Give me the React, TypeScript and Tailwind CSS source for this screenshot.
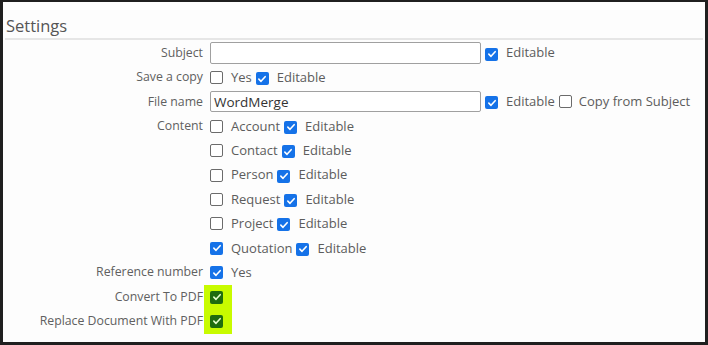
import React from "react";

function Box({ checked, green }: { checked?: boolean; green?: boolean }) {
  if (green) {
    return (
      <span className="inline-flex h-[13px] w-[13px] items-center justify-center rounded-[2px] bg-[#1f6d0f] shrink-0">
        <svg viewBox="0 0 12 12" className="h-[10px] w-[10px]">
          <path d="M2.2 6.2 L4.8 8.8 L9.8 3.2" fill="none" stroke="#e8ffd0" strokeWidth="1.9" strokeLinecap="round" strokeLinejoin="round" />
        </svg>
      </span>
    );
  }
  if (checked) {
    return (
      <span className="inline-flex h-[13px] w-[13px] items-center justify-center rounded-[2px] bg-[#1572e8] shrink-0">
        <svg viewBox="0 0 12 12" className="h-[10px] w-[10px]">
          <path d="M2.2 6.2 L4.8 8.8 L9.8 3.2" fill="none" stroke="#ffffff" strokeWidth="1.9" strokeLinecap="round" strokeLinejoin="round" />
        </svg>
      </span>
    );
  }
  return <span className="inline-block h-[13px] w-[13px] rounded-[2px] border border-[#6b6b6b] bg-white shrink-0" />;
}

function Row({ label, children, highlight }: { label?: string; children?: React.ReactNode; highlight?: boolean }) {
  return (
    <div className="flex h-[24.4px] items-center">
      <div className="w-[201px] shrink-0 pr-[1px] text-right text-[12.3px] text-[#606060]">{label}</div>
      <div className={"flex h-full items-center pl-[6px] " + (highlight ? "bg-[#c8fb00] w-[28px]" : "")}>{children}</div>
    </div>
  );
}

function T({ children, ml = "ml-[8px]" }: { children: React.ReactNode; ml?: string }) {
  return <span className={ml + " text-[13px] text-[#5c5c5c]"}>{children}</span>;
}

function ContentRow({ label, checked }: { label: string; checked?: boolean }) {
  return (
    <Row>
      <Box checked={checked} />
      <T>{label}</T>
      <span className="ml-[4px]"><Box checked /></span>
      <T>Editable</T>
    </Row>
  );
}

export default function App() {
  return (
    <div className="h-[345px] w-[708px] bg-[#1f1f1f] pl-[3px] pt-[2px] pr-[3px] pb-[3px]" style={{ fontFamily: '"Open Sans", sans-serif' }}>
      <div className="h-[340px] w-[702px] bg-[#fdfdfd]">
        <div className="px-[3px] pt-[13px] text-[16.5px] leading-[22px] text-[#555555]">Settings</div>
        <div className="mx-[2px] mt-[1px] h-[2px] bg-[#e6e6e6]" />
        <div className="pt-[1px]">
          <Row label="Subject">
            <div className="h-[22px] w-[271px] rounded-[2px] border border-[#a0a0a0] bg-white" />
            <span className="ml-[4px]"><Box checked /></span>
            <T>Editable</T>
          </Row>
          <Row label="Save a copy">
            <Box />
            <T>Yes</T>
            <span className="ml-[4px]"><Box checked /></span>
            <T>Editable</T>
          </Row>
          <Row label="File name">
            <div className="flex h-[21px] w-[271px] items-center rounded-[2px] border border-[#a0a0a0] bg-white pl-[3px] text-[13.5px] text-[#333333]">WordMerge</div>
            <span className="ml-[4px]"><Box checked /></span>
            <T>Editable</T>
            <span className="ml-[4px]"><Box /></span>
            <T ml="ml-[7px]">Copy from Subject</T>
          </Row>
          <Row label="Content">
            <Box />
            <T>Account</T>
            <span className="ml-[4px]"><Box checked /></span>
            <T>Editable</T>
          </Row>
          <ContentRow label="Contact" />
          <ContentRow label="Person" />
          <ContentRow label="Request" />
          <ContentRow label="Project" />
          <ContentRow label="Quotation" checked />
          <Row label="Reference number">
            <Box checked />
            <T>Yes</T>
          </Row>
          <Row label="Convert To PDF" highlight>
            <Box green />
          </Row>
          <Row label="Replace Document With PDF" highlight>
            <Box green />
          </Row>
        </div>
      </div>
    </div>
  );
}
